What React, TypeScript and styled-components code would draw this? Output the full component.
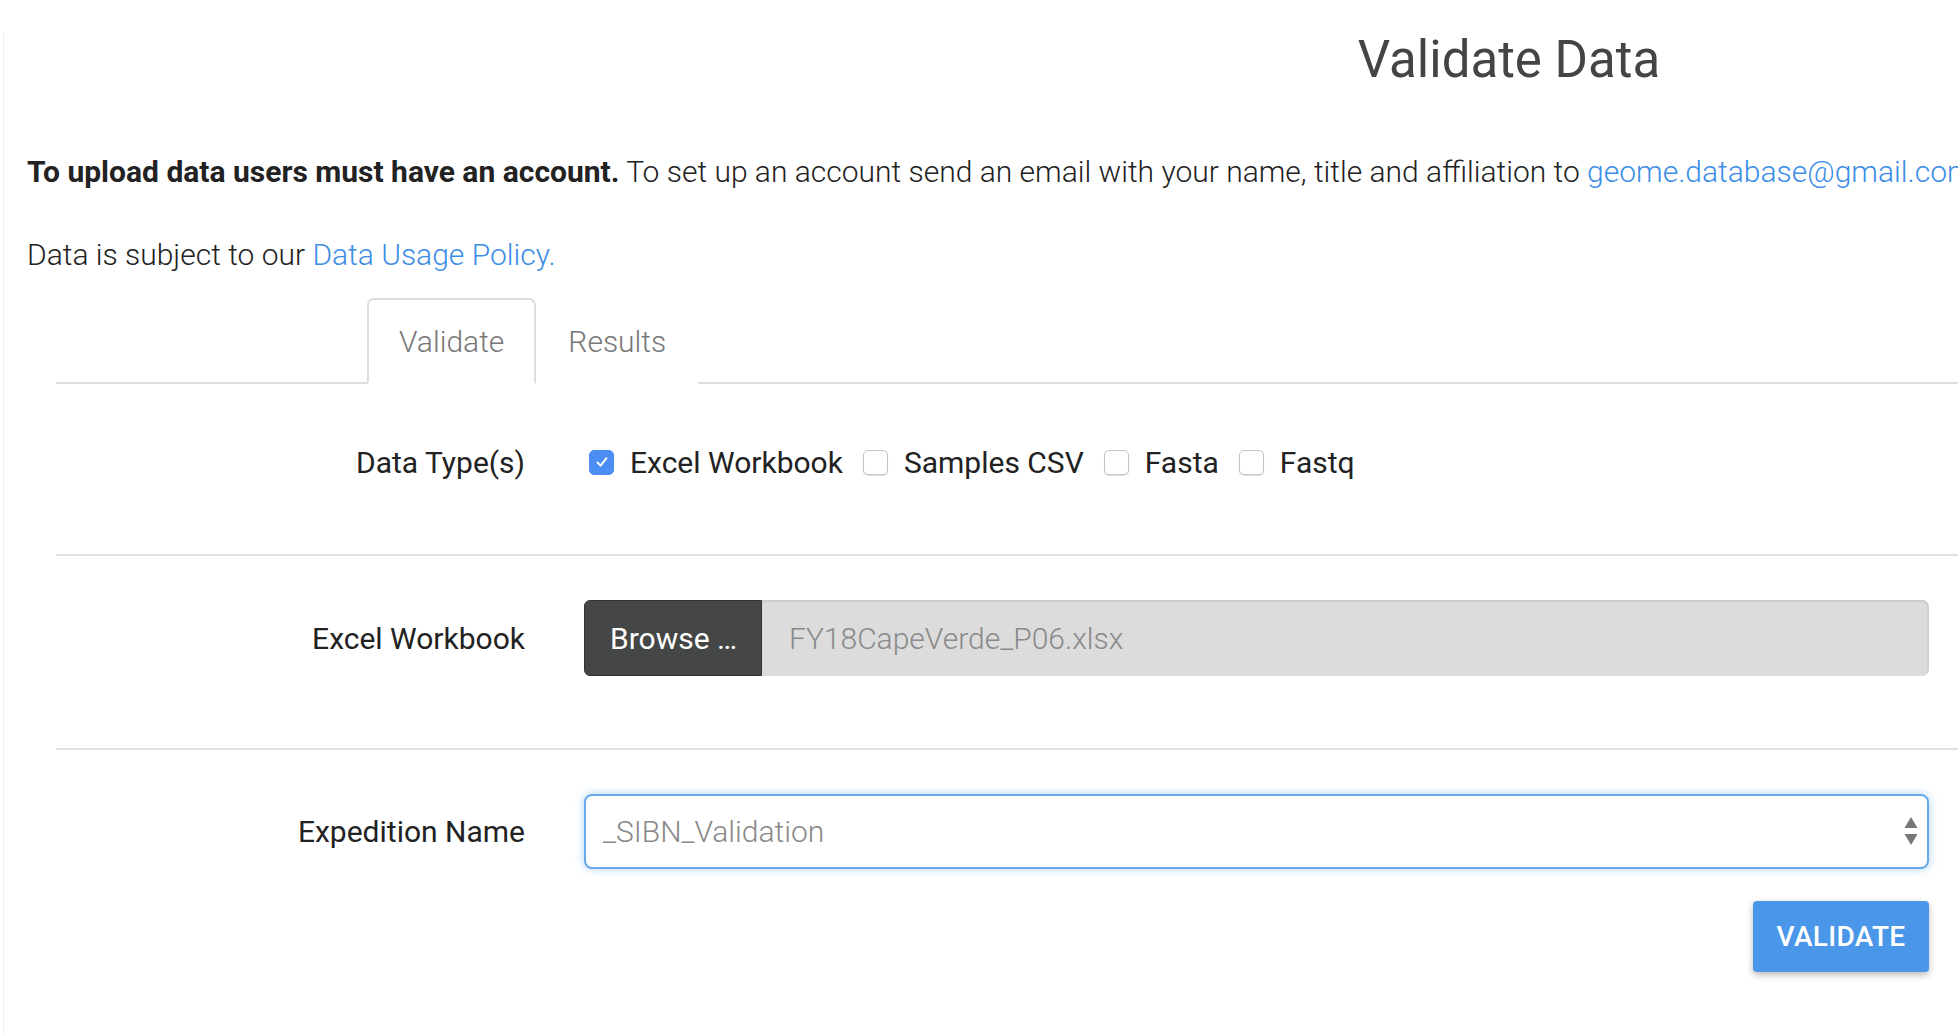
import styled, { createGlobalStyle } from "styled-components";

const GlobalStyle = createGlobalStyle`
	html, body {
		margin: 0;
		padding: 0;
		overflow: hidden;
		background: #fff;
	}
	body {
		font-family: Roboto, "Liberation Sans", sans-serif;
		color: #222;
	}
`;

const dataTypes = [
	{ label: "Excel Workbook", checked: true },
	{ label: "Samples CSV", checked: false },
	{ label: "Fasta", checked: false },
	{ label: "Fastq", checked: false },
];

const CheckIcon = () => (
	<svg width="14" height="14" viewBox="0 0 14 14">
		<path d="M2.5 7.5 L5.6 10.6 L11.5 3.2" fill="none" stroke="#fff" strokeWidth="2" strokeLinecap="round" strokeLinejoin="round" />
	</svg>
);

const SelectArrows = () => (
	<svg width="14" height="30" viewBox="0 0 14 30">
		<path d="M7 1 L13.5 12 L0.5 12 Z" fill="#777" />
		<path d="M7 29 L13.5 18 L0.5 18 Z" fill="#777" />
	</svg>
);

const App = () => {
	return (
		<>
			<GlobalStyle />
			<Page>
				<Title>Validate Data</Title>
				<Notice>
					<strong>To upload data users must have an account.</strong> To set up an account send an
					email with your name, title and affiliation to{" "}
					<Link href="#">geome.database@gmail.com</Link>
				</Notice>
				<Policy>
					Data is subject to our <Link href="#">Data Usage Policy.</Link>
				</Policy>

				<FormArea>
					<TabBar>
						<Tab active>Validate</Tab>
						<Tab>Results</Tab>
					</TabBar>

					<FormRow pad="40px 0 54px">
						<Label>Data Type(s)</Label>
						<Checks>
							{dataTypes.map((t) => (
								<CheckItem key={t.label}>
									<CheckBox checked={t.checked}>{t.checked && <CheckIcon />}</CheckBox>
									<span>{t.label}</span>
								</CheckItem>
							))}
						</Checks>
					</FormRow>

					<FormRow pad="44px 0 72px" divided>
						<Label>Excel Workbook</Label>
						<FileGroup>
							<BrowseButton>Browse …</BrowseButton>
							<FileName>FY18CapeVerde_P06.xlsx</FileName>
						</FileGroup>
					</FormRow>

					<FormRow pad="43px 0 0" divided>
						<Label>Expedition Name</Label>
						<Select>
							<span>_SIBN_Validation</span>
							<SelectArrows />
						</Select>
					</FormRow>

					<Actions>
						<ValidateButton>Validate</ValidateButton>
					</Actions>
				</FormArea>
			</Page>
		</>
	);
};

const Page = styled.div`
	width: 2960px;
	min-height: 1034px;
	margin-left: 3px;
	padding: 0 27px 0 23px;
	border-left: 1px solid #eeeeee;
	font-weight: 300;
	font-size: 30px;
`;

const Title = styled.h1`
	margin: 32px 0 0;
	padding-left: 4px;
	font-size: 51px;
	line-height: 56px;
	font-weight: 400;
	color: #444;
	text-align: center;
`;

const Notice = styled.p`
	margin: 64px 0 0;
	line-height: 40px;
	white-space: nowrap;
	color: #222;

	strong {
		font-weight: 700;
	}
`;

const Policy = styled.p`
	margin: 43px 0 0;
	line-height: 40px;
	color: #222;
`;

const Link = styled.a`
	color: #3c8de6;
	text-decoration: none;
`;

const FormArea = styled.div`
	margin: 23px 0 0 29px;
`;

const TabBar = styled.div`
	display: flex;
	padding-left: 311px;
	border-bottom: 2px solid #dddddd;
`;

const Tab = styled.div<{ active?: boolean }>`
	height: 86px;
	margin-bottom: -2px;
	padding: 0 30px;
	display: flex;
	align-items: center;
	box-sizing: border-box;
	color: #777;
	border: 2px solid ${(p) => (p.active ? "#dddddd" : "transparent")};
	border-bottom-color: ${(p) => (p.active ? "#fff" : "transparent")};
	border-radius: 7px 7px 0 0;
	background: #fff;
`;

const FormRow = styled.div<{ pad: string; divided?: boolean }>`
	display: grid;
	grid-template-columns: 469px 1345px;
	column-gap: 59px;
	align-items: center;
	padding: ${(p) => p.pad};
	border-top: ${(p) => (p.divided ? "2px solid #e2e2e2" : "none")};
`;

const Label = styled.label`
	min-height: 76px;
	display: flex;
	align-items: center;
	justify-content: flex-end;
	font-weight: 400;
	color: #222;
`;

const Checks = styled.div`
	display: flex;
	align-items: center;
	gap: 20px;
`;

const CheckItem = styled.label`
	display: flex;
	align-items: center;
	gap: 16px;
	font-weight: 400;
	color: #222;

	&:first-child {
		margin-left: 5px;
	}
`;

const CheckBox = styled.span<{ checked: boolean }>`
	flex: none;
	width: 25px;
	height: 25px;
	box-sizing: border-box;
	display: flex;
	align-items: center;
	justify-content: center;
	border-radius: 5px;
	background: ${(p) => (p.checked ? "#4c8ef4" : "#fff")};
	border: 1px solid ${(p) => (p.checked ? "#4c8ef4" : "#c4c4c4")};
	box-shadow: ${(p) => (p.checked ? "none" : "0 1px 1px rgba(0, 0, 0, 0.12)")};
`;

const FileGroup = styled.div`
	display: flex;
	height: 76px;
`;

const BrowseButton = styled.div`
	width: 178px;
	box-sizing: border-box;
	display: flex;
	align-items: center;
	padding-left: 25px;
	background: #454646;
	color: #fff;
	font-weight: 400;
	border: 1px solid #333;
	border-radius: 6px 0 0 6px;
`;

const FileName = styled.div`
	flex: 1;
	display: flex;
	align-items: center;
	padding-left: 27px;
	background: #dcdcdc;
	color: #8a8a8a;
	border-radius: 0 7px 7px 0;
	box-shadow: inset 0 2px 2px rgba(0, 0, 0, 0.07), inset -2px 0 1px rgba(0, 0, 0, 0.04);
`;

const Select = styled.div`
	height: 75px;
	box-sizing: border-box;
	display: flex;
	align-items: center;
	justify-content: space-between;
	padding: 0 9px 0 17px;
	border: 2px solid #6aa9e9;
	border-radius: 8px;
	box-shadow: 0 0 9px rgba(102, 175, 233, 0.55);
	color: #888;
	background: #fff;
`;

const Actions = styled.div`
	display: flex;
	justify-content: flex-end;
	width: 1873px;
	margin-top: 32px;
`;

const ValidateButton = styled.button`
	width: 176px;
	height: 71px;
	border: none;
	border-radius: 4px;
	background: #4a96e8;
	color: #fff;
	font-family: Roboto, "Liberation Sans", sans-serif;
	font-size: 28px;
	font-weight: 500;
	letter-spacing: 0.3px;
	text-transform: uppercase;
	box-shadow: 0 3px 7px rgba(0, 0, 0, 0.28);
`;

export default App;
